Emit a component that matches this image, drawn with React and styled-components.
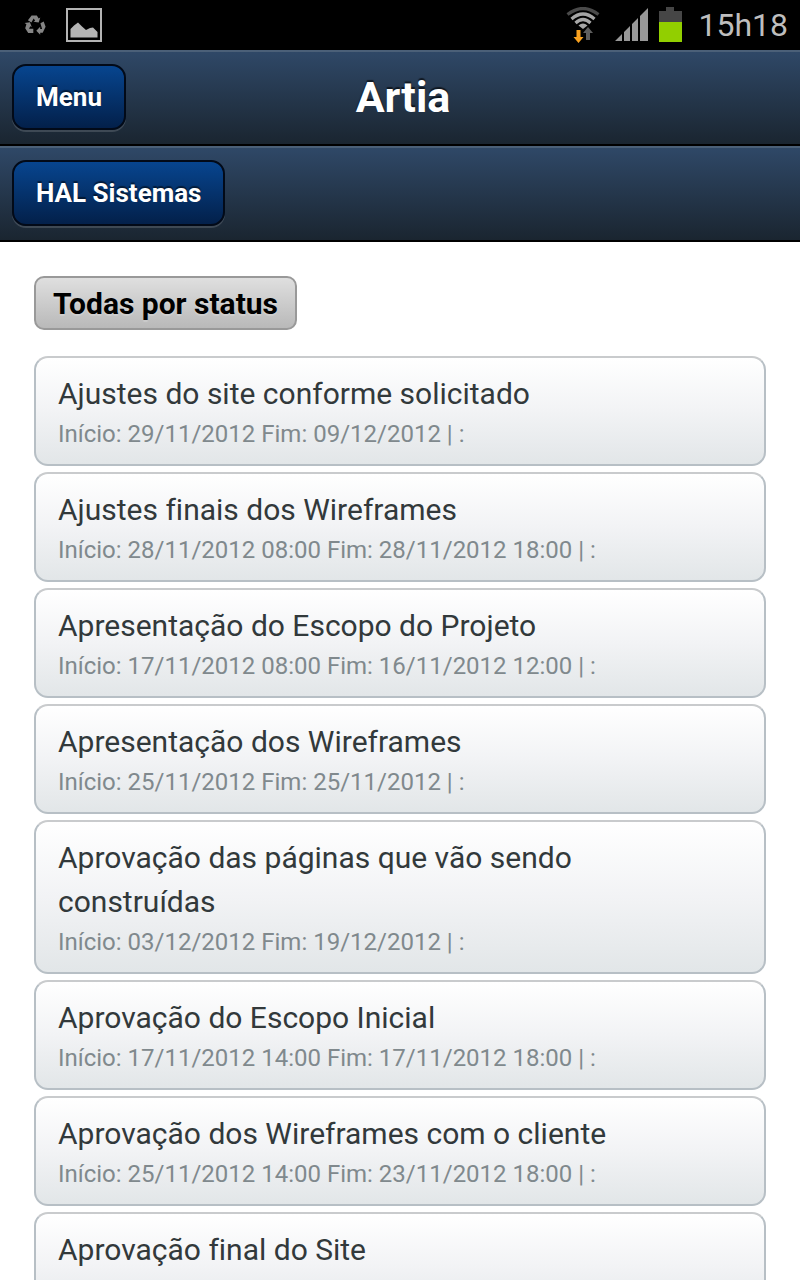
import React from 'react'
import styled, { createGlobalStyle } from 'styled-components'

const tasks = [
  { title: 'Ajustes do site conforme solicitado', dates: 'Início: 29/11/2012 Fim: 09/12/2012 | :' },
  { title: 'Ajustes finais dos Wireframes', dates: 'Início: 28/11/2012 08:00 Fim: 28/11/2012 18:00 | :' },
  { title: 'Apresentação do Escopo do Projeto', dates: 'Início: 17/11/2012 08:00 Fim: 16/11/2012 12:00 | :' },
  { title: 'Apresentação dos Wireframes', dates: 'Início: 25/11/2012 Fim: 25/11/2012 | :' },
  { title: 'Aprovação das páginas que vão sendo construídas', dates: 'Início: 03/12/2012 Fim: 19/12/2012 | :' },
  { title: 'Aprovação do Escopo Inicial', dates: 'Início: 17/11/2012 14:00 Fim: 17/11/2012 18:00 | :' },
  { title: 'Aprovação dos Wireframes com o cliente', dates: 'Início: 25/11/2012 14:00 Fim: 23/11/2012 18:00 | :' },
  { title: 'Aprovação final do Site' },
]

const RecycleIcon = () => (
  <svg width="22" height="20" viewBox="0 0 22 20" fill="#858585" aria-hidden="true">
    <path d="M7.6 0.600h5.200l1.900 2.900 1.600-.9-1.600 5-5.200-.9 1.600-1-1.400-2.300-2.300 4.100L3.900 5.300z" />
    <path d="M.6 8l5.300-.7 1.900 4.800-1.500-.8-1.300 2.500h4.300v4.200H4.200L1.200 13.200l1.200-3.900z" />
    <path d="M16.400 8.200l3.300-1.700 1.900 5.300-2.900 6h-2.500v1.900l-3.900-3.900 3.900-4v2.100h1.900z" />
  </svg>
)

const PictureIcon = () => (
  <svg width="36" height="34" viewBox="0 0 36 34" aria-hidden="true">
    <rect x="1" y="1" width="34" height="32" fill="none" stroke="#b4b4b4" strokeWidth="2" />
    <path d="M4.500 29.500V21l3.500-3.500 4-3 4 4 4 3.500 4-2 3-.5 4.500 4.500v5.500z" fill="#b4b4b4" />
  </svg>
)

const WifiIcon = () => (
  <svg width="38" height="36" viewBox="0 0 38 36" fill="none" aria-hidden="true">
    <path d="M1.500 7.500Q17-4.500 32.500 7.500" stroke="#4a4a4a" strokeWidth="3.200" />
    <path d="M5.500 12Q17 2 28.500 12" stroke="#a6a6a6" strokeWidth="3.200" />
    <path d="M9.500 16Q17 9 24.500 16" stroke="#a6a6a6" strokeWidth="3.200" />
    <path d="M12.500 18.500Q17 14.500 21.500 18.500L17 22z" fill="#a6a6a6" />
    <path d="M10.500 23h4v7h3L12.500 36l-5-6h3z" fill="#f9a11f" />
    <path d="M20 33v-7h-3l5-6 5 6h-3v7z" fill="#5e5e5e" />
  </svg>
)

const SignalIcon = () => (
  <svg width="34" height="34" viewBox="0 0 34 34" fill="#989898" aria-hidden="true">
    <path d="M1 33l7-7v7zM10 24l6-6v15h-6zM18 16l6-6v23h-6zM26 8l8-8v33h-8z" />
  </svg>
)

const BatteryIcon = () => (
  <svg width="24" height="36" viewBox="0 0 24 36" aria-hidden="true">
    <path d="M8 0h8v4h8v11H1V4h7z" fill="#464646" />
    <path d="M1 15h23v20H1z" fill="#92cf00" />
  </svg>
)

const App = () => {
  return (
    <Screen>
      <GlobalStyle />
      <StatusBar>
        <StatusGroup $gap={20}>
          <RecycleIcon />
          <PictureIcon />
        </StatusGroup>
        <StatusGroup $gap={10}>
          <WifiIcon />
          <SignalIcon />
          <BatteryIcon />
          <Clock>15h18</Clock>
        </StatusGroup>
      </StatusBar>
      <Toolbar as="header">
        <BarButton type="button">Menu</BarButton>
        <Title>Artia</Title>
      </Toolbar>
      <Toolbar>
        <BarButton type="button">HAL Sistemas</BarButton>
      </Toolbar>
      <Content>
        <FilterButton type="button">Todas por status</FilterButton>
        <TaskList>
          {tasks.map((task) => (
            <li key={task.title}>
              <TaskLink href="#">
                <TaskTitle>{task.title}</TaskTitle>
                {task.dates && <TaskDates>{task.dates}</TaskDates>}
              </TaskLink>
            </li>
          ))}
        </TaskList>
      </Content>
    </Screen>
  )
}

const GlobalStyle = createGlobalStyle`
  * {
    box-sizing: border-box;
  }
  body {
    margin: 0;
    background: #fff;
    font-family: Roboto, sans-serif;
    font-variant-ligatures: none;
  }
  button {
    font-family: inherit;
    cursor: pointer;
  }
`
const Screen = styled.div`
  display: flex;
  flex-direction: column;
  height: 100vh;
`
const StatusBar = styled.div`
  display: flex;
  flex-shrink: 0;
  align-items: center;
  justify-content: space-between;
  height: 50px;
  padding: 0 12px 0 24px;
  background: #000;
`
const StatusGroup = styled.div`
  display: flex;
  align-items: center;
  gap: ${({ $gap }) => $gap}px;
`
const Clock = styled.span`
  margin-left: 6px;
  color: #bebebe;
  font-size: 32px;
  line-height: 50px;
`
const Toolbar = styled.div`
  display: grid;
  grid-template-columns: 1fr auto 1fr;
  flex-shrink: 0;
  align-items: center;
  justify-items: start;
  height: 96px;
  padding: 0 12px 2px;
  border-top: 2px solid #4b6078;
  border-bottom: 2px solid #000;
  background: linear-gradient(#2f4867, #1a2530);
`
const Title = styled.h1`
  margin: 0;
  padding-left: 6px;
  color: #fff;
  font-size: 43px;
  line-height: 56px;
  font-weight: 700;
  text-shadow: 0 -2px 1px rgba(0, 0, 0, 0.6);
`
const BarButton = styled.button`
  height: 66px;
  padding: 0 22px;
  border: 2px solid #020a18;
  border-radius: 14px;
  background: linear-gradient(#07458f, #03204a);
  box-shadow: 0 2px 0 rgba(255, 255, 255, 0.15);
  color: #fff;
  font-size: 26px;
  font-weight: 700;
  white-space: nowrap;
  text-shadow: 0 -2px 1px rgba(0, 0, 0, 0.5);
`
const Content = styled.main`
  flex: 1;
  min-height: 0;
  padding: 34px;
  overflow-y: auto;
  scrollbar-width: none;
`
const FilterButton = styled.button`
  display: block;
  height: 54px;
  padding: 0 17px;
  border: 2px solid #999;
  border-radius: 10px;
  background: linear-gradient(#dfdfdf, #b9b9b9);
  color: #000;
  font-size: 30px;
  font-weight: 700;
  text-shadow: 0 2px 1px rgba(255, 255, 255, 0.2);
`
const TaskList = styled.ul`
  display: flex;
  flex-direction: column;
  gap: 6px;
  margin: 26px 0 0;
  padding: 0;
  list-style: none;
`
const TaskLink = styled.a`
  display: block;
  min-height: 110px;
  padding: 14px 60px 12px 22px;
  border: 2px solid #b7bfc5;
  border-top-color: #c9cbcd;
  border-radius: 14px;
  background: linear-gradient(#fff, #f2f3f5 50%, #e2e6e8);
  text-decoration: none;
`
const TaskTitle = styled.span`
  display: block;
  color: #32393b;
  font-size: 30px;
  line-height: 44px;
`
const TaskDates = styled.span`
  display: block;
  color: #80898d;
  font-size: 24px;
  line-height: 36px;
`

export default App
